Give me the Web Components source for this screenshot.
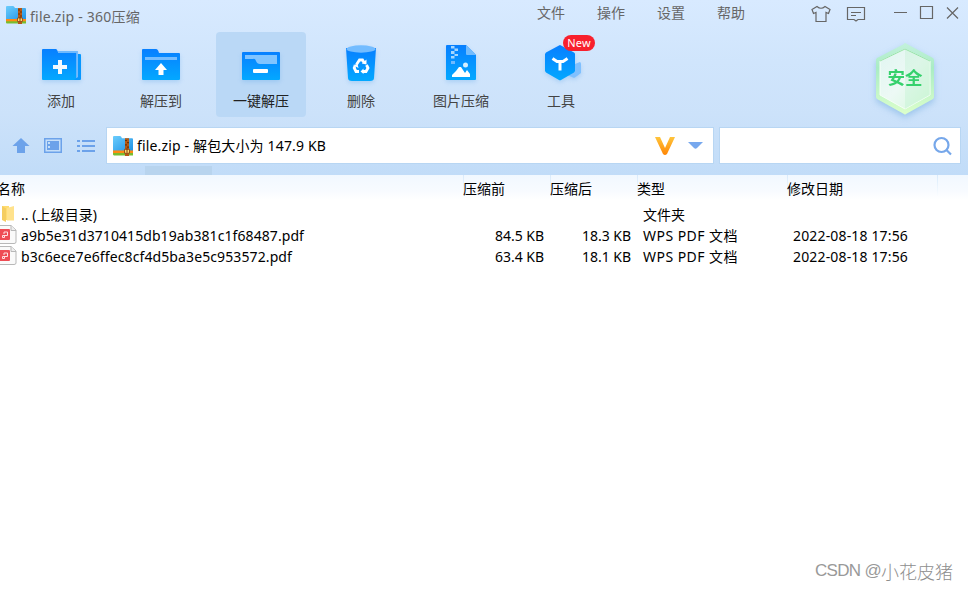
<!DOCTYPE html>
<html lang="zh-CN">
<head>
<meta charset="utf-8">
<title>file.zip - 360压缩</title>
<style>
html,body{margin:0;height:100%;overflow:hidden;background:#fff}
body{font:14px/20px "Noto Sans","Noto Sans CJK SC",sans-serif;color:#000}
</style>
</head>
<body>
<zip-window></zip-window>
<script>
const define=(name,html,init)=>customElements.define(name,class extends HTMLElement{
  constructor(){super();const t=document.createElement('template');t.innerHTML=html;
    this.attachShadow({mode:'open'}).append(t.content.cloneNode(true));}
  connectedCallback(){if(init)init.call(this);}
});

/* Text run whose letter spacing is adjusted to fill the width given in "w". */
define('fit-text',`<style>:host{display:inline-block;white-space:pre}span{display:inline-block}</style><span><slot></slot></span>`,function(){
  const w=+this.getAttribute('w');if(!w)return;
  const s=this.shadowRoot.querySelector('span'),n=this.textContent.length;
  const d=(w-s.getBoundingClientRect().width)/n;
  s.style.letterSpacing=d+'px';this.style.width=w+'px';
});

define('zip-logo',`<style>:host{display:block;width:20px;height:18px}svg{display:block;width:100%;height:100%}</style>
<svg viewBox="0 0 20 18" preserveAspectRatio="none"><defs><linearGradient id="b" x2="1" y2="1"><stop stop-color="#6bcdfd"/><stop offset="1" stop-color="#1e91e4"/></linearGradient></defs>
<path d="M0 1Q0 0 1 0H7Q8 0 9 2H19Q20 2 20 3V14H0Z" fill="url(#b)"/><path d="M0 13H20V16H0Z" fill="#ff8a13"/><path d="M0 15.3H20V17.5H1Q0 17.5 0 16.5Z" fill="#78bd2f"/>
<path d="M12 2H16V18H12Z" fill="#b45814"/><path d="M12 4H14M14 6H16M12 8H14M14 10H16" stroke="#713000"/><path d="M11.5 12H16.5V15.5H11.5Z" fill="#ffdc72" stroke="#864315" stroke-width=".8"/><path d="M14 11V15" stroke="#803d0d"/></svg>`);

define('title-bar',`<style>
:host{display:flex;height:32px;color:#666;align-items:flex-start;box-sizing:border-box;padding:0 8px 0 6px}
zip-logo{margin:6px 4px 0 0}.t{margin-top:7px}.menu{display:flex;gap:32px;margin-left:397px;padding-top:3px}
svg{display:block;flex:none}.ic{display:flex;margin-left:auto;padding-top:4px}</style>
<zip-logo></zip-logo><fit-text class="t" w="110">file.zip - 360压缩</fit-text>
<nav class="menu"><span>文件</span><span>操作</span><span>设置</span><span>帮助</span></nav>
<div class="ic"><svg width="150" height="20" fill="none" stroke="#666" stroke-width="1.2">
<path d="M7 2.5Q11 6 15 2.5L20 5.5L18.500 9.5L16 8.5V17.5H6V8.5L3.500 9.5L2 5.500Z"/>
<path d="M37.500 3.500H54.500V15.500H48L46 17L44 15.500H37.500ZM41 8.500H51M41 11.500H46"/>
<path d="M84 8.500H97M110.500 2.500H122.500V14.500H110.500Z"/><path d="M137 3.500L148 14.500M148 3.500L137 14.500"/></svg></div>`);

define('tool-button',`<style>:host{display:flex;flex-direction:column;align-items:center;box-sizing:border-box;width:90px;height:85px;padding-top:11px;border-radius:4px;color:#444}
:host([active]){background:#bad8f6;color:#222}
.i{display:block;height:42px;width:44px;filter:drop-shadow(0 2px 2px #64a8e955)}.l{margin-top:6px}</style>
<slot name="icon" class="i"></slot><span class="l"><slot></slot></span>`);

const icons={
add:`<g transform="translate(0 3)"><path d="M3 4Q3 3 4 3H17Q18 3 19 6H37Q38 6 38 7V34H4Q3 34 3 33Z" fill="url(#g)"/><path d="M19 6H38V32" stroke="#6fb9fd" stroke-width="1.800" fill="none"/><path d="M39 8H41Q42 8 42 9V33Q42 34 41 34H35L39 31Z" fill="#0797ff"/><path d="M14 21H28M21 14V28" stroke="#f2faff" stroke-width="4"/></g>`,
extract:`<g transform="translate(0 3)"><path d="M3 4Q3 3 4 3H17Q19 3 20 7H40Q41 7 41 8V33Q41 34 40 34H4Q3 34 3 33Z" fill="url(#g)"/><path d="M6 11H38V14H6Z" fill="#75bdff"/><path d="M22 17L28 24H24.500V29H19.500V24H16Z" fill="#fff"/></g>`,
one:`<rect x="3" y="9" width="38" height="28" rx="1" fill="url(#g)"/><path d="M6 12H38V21H21Q18 21 17 18T14 16H6Z" fill="#81c4ff"/><rect x="14" y="26" width="15" height="4" rx="1" fill="#fff"/>`,
trash:`<path d="M7 5H37L35 35Q35 38 31 38H13Q9 38 9 35Z" fill="url(#g)"/><ellipse cx="22" cy="6" rx="14.500" ry="3.700" fill="#73bcff"/><g fill="none" stroke="#fff" stroke-width="2.800"><path d="M17.500 21.500L20.500 17H23.500L25 19.500"/><path d="M27.500 22L29 25L27 28.500H24"/><path d="M20 28.500H17L15.200 25L16 23"/></g><path d="M27.500 16.500V21.500L22.800 20.500ZM24.500 25.500V31L21.500 28.500ZM14 22L18.500 21L19.500 25Z" fill="#fff"/>`,
image:`<path d="M7 3Q7 2 8 2H27L37 12V36Q37 37 36 37H8Q7 37 7 36Z" fill="url(#g)"/><path d="M27 2L37 12H28Q27 12 27 11Z" fill="#72bbfd"/><path d="M12 3H15.500V5.500H12ZM15.500 5.500H19V8H15.500ZM12 8H15.500V11H12ZM15.500 11H19V13H15.500ZM12 13H15.500V15.500H12Z" fill="#a6d7ff"/><path d="M12 18H16V21H12Z" fill="#70baff"/><circle cx="26.500" cy="22" r="2.500" fill="#d4efff"/><path d="M13 34V32L17 28L20 24H22L26 30L28 27L31 31V34Z" fill="#fff"/>`,
tools:`<path d="M36 21L41 19Q42 19.500 42 21V30L36 34.500Q35 35 34 34.500L28 32Z" fill="#80c0fe"/><path d="M21 2Q21.500 2 22 2.500L35 9.500Q36 10 36 11V28L35 29.500L22 37Q21 37.500 20 37L7 29.500L6 28V11L7 9.500L20 2.500Z" fill="url(#g)"/><path d="M13.500 15.500L18 18.500H24L28.500 15.500M21 18.500V27.500" fill="none" stroke="#fff" stroke-width="3"/>`};

define('tool-icon',`<style>:host{display:block}svg{display:block}</style><div></div>`,function(){
 this.shadowRoot.querySelector('div').innerHTML=`<svg width="44" height="42"><defs><linearGradient id="g" x2="0" y2="1"><stop stop-color="#087fff"/><stop offset="1" stop-color="#03a8ff"/></linearGradient></defs>${icons[this.getAttribute('name')]}</svg>`;
});

define('safe-badge',`<style>:host{display:block;width:68px;height:80px}svg{display:block;filter:drop-shadow(0 3px 3px #7cb0e199)}</style>
<svg width="68" height="80"><defs><linearGradient id="a" x2="0" y2="1"><stop stop-color="#c3f1dc"/><stop offset=".35" stop-color="#a9ecc4"/><stop offset="1" stop-color="#dcffcb"/></linearGradient><linearGradient id="c" x2="1" y2="1"><stop stop-color="#e0f5f1"/><stop offset=".5" stop-color="#edf9f5"/><stop offset="1" stop-color="#d5f9da"/></linearGradient></defs>
<path d="M34 4Q35 4 36 5L62 19Q63 20 63 21V58Q63 59 62 60L35 75Q34 76 33 75L6 60Q5 59 5 58V21Q5 20 6 19L33 5Q33 4 34 4Z" fill="url(#a)"/>
<path d="M34 10L59 22V56L34 70L9 56V22Z" fill="url(#c)" stroke="#f5fff7"/><path d="M34 10L59 22V56L34 70Z" fill="#a4efbb" opacity=".22"/><path d="M9 22L34 10L59 22" fill="none" stroke="#98e3aa"/>
<text x="34" y="45" text-anchor="middle" font-family="Noto Sans CJK SC, sans-serif" font-size="17.500" font-weight="700" fill="#35d16c">安全</text></svg>`);

define('tool-bar',`<style>:host{display:flex;gap:10px;padding-left:16px;height:96px;align-items:flex-start}
.new{position:absolute;left:47px;top:3px;width:32px;height:16px;border-radius:8px;background:#f8202d;color:#fff;font:11px/16px "Noto Sans",sans-serif;text-align:center;letter-spacing:.2px}
.rel{position:relative}safe-badge{margin-left:255px;margin-top:7px}</style>
<tool-button><tool-icon slot="icon" name="add"></tool-icon>添加</tool-button>
<tool-button><tool-icon slot="icon" name="extract"></tool-icon>解压到</tool-button>
<tool-button active><tool-icon slot="icon" name="one"></tool-icon>一键解压</tool-button>
<tool-button><tool-icon slot="icon" name="trash"></tool-icon>删除</tool-button>
<tool-button><tool-icon slot="icon" name="image"></tool-icon>图片压缩</tool-button>
<div class="rel"><tool-button><tool-icon slot="icon" name="tools"></tool-icon>工具</tool-button><span class="new">New</span></div>
<safe-badge></safe-badge>`);

define('address-bar',`<style>:host{display:flex;height:35px;padding:0 8px 0 0}
.nav{width:107px;flex:none}svg{display:block}.box{background:#fff;display:flex;align-items:center;box-sizing:border-box;box-shadow:0 0 0 1px #b8d6f3}
.path{width:606px;padding-left:6px}.search{width:240px;margin-left:7px;justify-content:flex-end;padding-right:8px}
zip-logo{margin-right:4px;height:20px}.end{margin-left:auto;margin-right:10px}</style>
<svg class="nav" width="107" height="35" fill="#6ca2ea"><path d="M21 10L29.500 18H25V25H17V18H12.500Z"/><path d="M44 10H62V25H44ZM45.500 11.500V23.500H60.500V11.500Z" fill-rule="evenodd"/><path d="M47 13H59V22H47Z"/><path d="M48 14H50V16H48ZM48 18H50V20H48Z" fill="#c5dff8"/><path d="M77 12H80V14H77ZM82 12H95V14H82ZM77 17H80V19H77ZM82 17H95V19H82ZM77 22H80V24H77ZM82 22H95V24H82Z"/></svg>
<div class="box path"><zip-logo></zip-logo><fit-text w="189">file.zip - 解包大小为 147.9 KB</fit-text>
<svg class="end" width="49" height="35"><defs><linearGradient id="v" x2="0" y2="1"><stop stop-color="#ffc53c"/><stop offset="1" stop-color="#ff8605"/></linearGradient></defs><path d="M1 9H6L11 20L16 9H21L13 26Q11 28 9 26Z" fill="url(#v)"/><path d="M34 14H49L43 20Q41.500 21.500 40 20Z" fill="#77a8ee"/></svg></div>
<div class="box search"><svg width="20" height="22" fill="none" stroke="#76a7ea" stroke-width="2.200"><circle cx="9.500" cy="10" r="7"/><path d="M14 14.500L19 19.500"/></svg></div>`);

define('list-head',`<style>:host{display:grid;grid-template-columns:463px 87px 87px 150px 150px 1fr;height:25px;background:linear-gradient(#f1f8ff,#f8fbff 65%,#fff)}
span{line-height:27px;white-space:nowrap;background:linear-gradient(#d8eafb,#fafdff) no-repeat 0 0/1px 21px}
span:first-of-type{background:none;margin-left:-3px}</style>
<span>名称</span><span>压缩前</span><span>压缩后</span><span>类型</span><span>修改日期</span><span></span>`);

define('file-row',`<style>:host{display:grid;grid-template-columns:21px 442px 81px 87px 12px 150px 1fr;height:21px;line-height:21px;white-space:nowrap}
svg{display:block}.r{text-align:right}</style><div class="i"></div><slot name="name"></slot><span class="r"><slot name="a"></slot></span><span class="r"><slot name="b"></slot></span><span></span><span><slot name="type"></slot></span><span><slot name="date"></slot></span>`,function(){
 this.shadowRoot.querySelector('.i').innerHTML=this.hasAttribute('folder')?
 `<svg width="18" height="21"><path d="M2 2H9V16H2Z" fill="#ffdc70"/><path d="M7 4L14 2V16.500H7Z" fill="#ffe28c"/><path d="M2 2L6 4.500V18L2 16Z" fill="#f5cd5f"/></svg>`:
 `<svg width="18" height="21"><path d="M-2 .5H11L16 5V17Q16 18.500 14 18.500H-2Z" fill="#fafafa" stroke="#b8b8b8"/><path d="M11 .5V5.500H16" fill="#eee" stroke="#b8b8b8"/><rect x="-1" y="4" width="11" height="11" rx="1" fill="#ee4c54"/><path d="M4 9V7H7.500V10.500H2.500V12.500H4.500V10.500" fill="none" stroke="#ffdfe1"/></svg>`;
});

define('zip-window',`<style>
:host{display:flex;flex-direction:column;width:968px;height:589px;background:#fff;overflow:hidden;position:relative}
header{height:175px;background:linear-gradient(#d8eaff,#d0e5fc 35%,#cce2fa 65%,#c1dcf8);display:flex;flex-direction:column}
.strip{width:67px;height:9px;margin:3px 0 0 145px;background:#b8d4ee}
main{padding-top:4px}
.mark{position:absolute;left:815px;top:560px;display:flex;color:#8e8e8e;font:300 18px/22px "Noto Sans CJK SC",sans-serif}
.mark .en{font-family:"Liberation Sans",sans-serif;font-size:17px;color:#999}</style>
<header><title-bar></title-bar><tool-bar></tool-bar><address-bar></address-bar><div class="strip"></div></header>
<list-head></list-head>
<main>
<file-row folder><fit-text slot="name" w="76">.. (上级目录)</fit-text><span slot="type">文件夹</span></file-row>
<file-row><fit-text slot="name" w="283">a9b5e31d3710415db19ab381c1f68487.pdf</fit-text><fit-text slot="a" w="49">84.5 KB</fit-text><fit-text slot="b" w="49">18.3 KB</fit-text><fit-text slot="type" w="95">WPS PDF 文档</fit-text><fit-text slot="date" w="115">2022-08-18 17:56</fit-text></file-row>
<file-row><fit-text slot="name" w="271">b3c6ece7e6ffec8cf4d5ba3e5c953572.pdf</fit-text><fit-text slot="a" w="49">63.4 KB</fit-text><fit-text slot="b" w="49">18.1 KB</fit-text><fit-text slot="type" w="95">WPS PDF 文档</fit-text><fit-text slot="date" w="115">2022-08-18 17:56</fit-text></file-row>
</main>
<div class="mark"><fit-text class="en" w="66">CSDN @</fit-text><fit-text w="72">小花皮猪</fit-text></div>`);
</script>
</body>
</html>
